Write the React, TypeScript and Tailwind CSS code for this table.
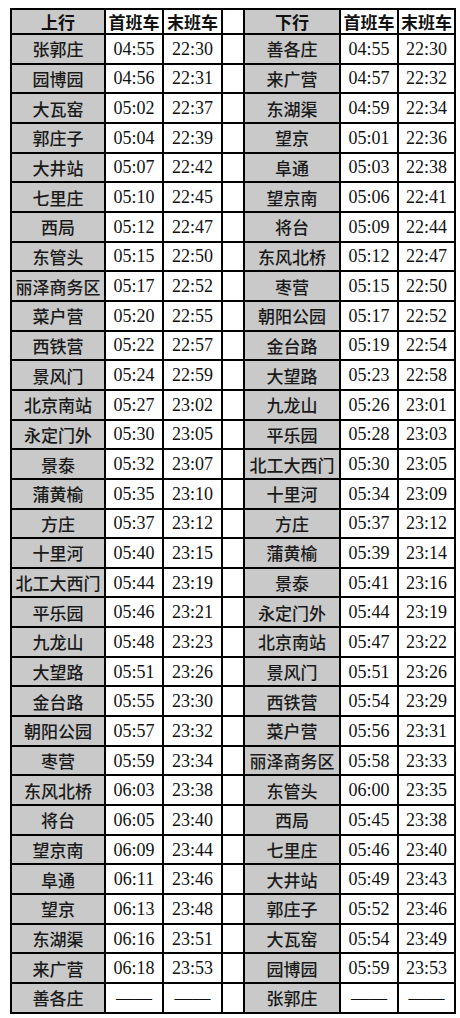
import React from "react";

const left: [string, string, string][] = [
  ["张郭庄", "04:55", "22:30"],
  ["园博园", "04:56", "22:31"],
  ["大瓦窑", "05:02", "22:37"],
  ["郭庄子", "05:04", "22:39"],
  ["大井站", "05:07", "22:42"],
  ["七里庄", "05:10", "22:45"],
  ["西局", "05:12", "22:47"],
  ["东管头", "05:15", "22:50"],
  ["丽泽商务区", "05:17", "22:52"],
  ["菜户营", "05:20", "22:55"],
  ["西铁营", "05:22", "22:57"],
  ["景风门", "05:24", "22:59"],
  ["北京南站", "05:27", "23:02"],
  ["永定门外", "05:30", "23:05"],
  ["景泰", "05:32", "23:07"],
  ["蒲黄榆", "05:35", "23:10"],
  ["方庄", "05:37", "23:12"],
  ["十里河", "05:40", "23:15"],
  ["北工大西门", "05:44", "23:19"],
  ["平乐园", "05:46", "23:21"],
  ["九龙山", "05:48", "23:23"],
  ["大望路", "05:51", "23:26"],
  ["金台路", "05:55", "23:30"],
  ["朝阳公园", "05:57", "23:32"],
  ["枣营", "05:59", "23:34"],
  ["东风北桥", "06:03", "23:38"],
  ["将台", "06:05", "23:40"],
  ["望京南", "06:09", "23:44"],
  ["阜通", "06:11", "23:46"],
  ["望京", "06:13", "23:48"],
  ["东湖渠", "06:16", "23:51"],
  ["来广营", "06:18", "23:53"],
  ["善各庄", "——", "——"],
];

const right: [string, string, string][] = [
  ["善各庄", "04:55", "22:30"],
  ["来广营", "04:57", "22:32"],
  ["东湖渠", "04:59", "22:34"],
  ["望京", "05:01", "22:36"],
  ["阜通", "05:03", "22:38"],
  ["望京南", "05:06", "22:41"],
  ["将台", "05:09", "22:44"],
  ["东风北桥", "05:12", "22:47"],
  ["枣营", "05:15", "22:50"],
  ["朝阳公园", "05:17", "22:52"],
  ["金台路", "05:19", "22:54"],
  ["大望路", "05:23", "22:58"],
  ["九龙山", "05:26", "23:01"],
  ["平乐园", "05:28", "23:03"],
  ["北工大西门", "05:30", "23:05"],
  ["十里河", "05:34", "23:09"],
  ["方庄", "05:37", "23:12"],
  ["蒲黄榆", "05:39", "23:14"],
  ["景泰", "05:41", "23:16"],
  ["永定门外", "05:44", "23:19"],
  ["北京南站", "05:47", "23:22"],
  ["景风门", "05:51", "23:26"],
  ["西铁营", "05:54", "23:29"],
  ["菜户营", "05:56", "23:31"],
  ["丽泽商务区", "05:58", "23:33"],
  ["东管头", "06:00", "23:35"],
  ["西局", "05:45", "23:38"],
  ["七里庄", "05:46", "23:40"],
  ["大井站", "05:49", "23:43"],
  ["郭庄子", "05:52", "23:46"],
  ["大瓦窑", "05:54", "23:49"],
  ["园博园", "05:59", "23:53"],
  ["张郭庄", "——", "——"],
];

const cjk = "font-['Noto_Sans_CJK_SC','Noto_Sans',sans-serif]";
const serif = "font-['Liberation_Serif','Noto_Sans_CJK_SC',serif]";

function Name({ t }: { t: string }) {
  return (
    <div className={`bg-[#c9c9c9] flex items-center justify-center text-[17px] font-medium leading-none text-[#1a1a1a] whitespace-nowrap ${cjk}`}>
      {t}
    </div>
  );
}

function Time({ t }: { t: string }) {
  return (
    <div className={`bg-white flex items-center justify-center text-[18px] leading-none text-[#111] whitespace-nowrap ${serif}`}>
      {t}
    </div>
  );
}

export default function App() {
  return (
    <div className="w-[460px] h-[1018px] bg-white pt-[8px] pl-[10px]">
      <div
        className="grid w-[446px] bg-black p-[2px] gap-[2px] grid-cols-[92px_56px_57px_20px_94px_56px_55px] grid-rows-[23px_repeat(33,27.67px)]"
      >
        <div className={`bg-[#c9c9c9] flex items-center justify-center text-[17px] font-bold leading-none text-[#111] ${cjk}`}>上行</div>
        <div className={`bg-white flex items-center justify-center text-[17px] font-bold leading-none text-[#111] ${cjk}`}>首班车</div>
        <div className={`bg-white flex items-center justify-center text-[17px] font-bold leading-none text-[#111] ${cjk}`}>末班车</div>
        <div className="bg-white" />
        <div className={`bg-[#c9c9c9] flex items-center justify-center text-[17px] font-bold leading-none text-[#111] ${cjk}`}>下行</div>
        <div className={`bg-white flex items-center justify-center text-[17px] font-bold leading-none text-[#111] ${cjk}`}>首班车</div>
        <div className={`bg-white flex items-center justify-center text-[17px] font-bold leading-none text-[#111] ${cjk}`}>末班车</div>
        {left.map((l, i) => {
          const r = right[i];
          return (
            <React.Fragment key={i}>
              <Name t={l[0]} />
              <Time t={l[1]} />
              <Time t={l[2]} />
              <div className="bg-white" />
              <Name t={r[0]} />
              <Time t={r[1]} />
              <Time t={r[2]} />
            </React.Fragment>
          );
        })}
      </div>
    </div>
  );
}
